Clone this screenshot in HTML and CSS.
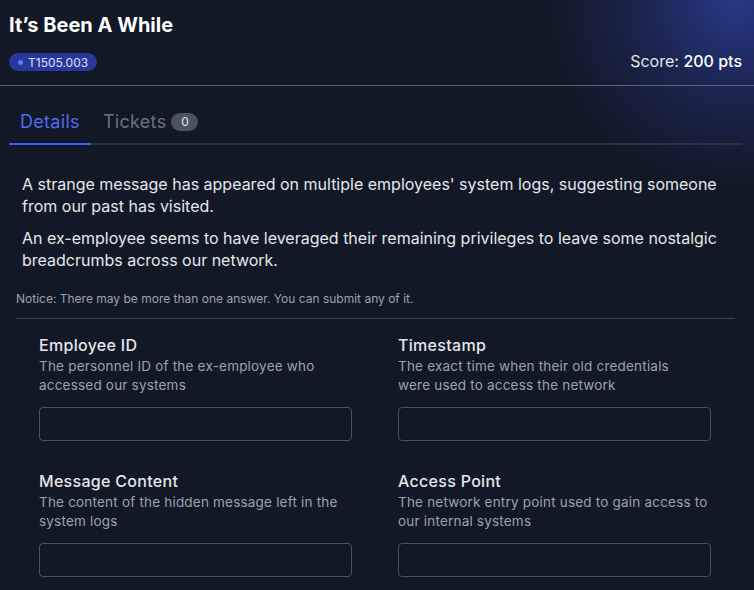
FILE: index.html
```html
<!DOCTYPE html>
<html>
<head>
    <title>It's Been A While</title>
    <meta charset="UTF-8">
    <link rel="stylesheet" href="styles.css">
</head>
<body>
    <div class="challenge">
        <div class="challenge-header">
            <div class="header-left">
                <h1 class="challenge-title">It’s Been A While</h1>
                <span class="technique-badge"><span class="badge-dot"></span>T1505.003</span>
            </div>
            <div class="score">Score: <strong>200 pts</strong></div>
        </div>

        <div class="tabs">
            <div class="tab active">Details</div>
            <div class="tab">Tickets <span class="tab-count">0</span></div>
        </div>

        <div class="description">
            <p>A strange message has appeared on multiple employees' system logs, suggesting someone from our past has visited.</p>
            <p>An ex-employee seems to have leveraged their remaining privileges to leave some nostalgic breadcrumbs across our network.</p>
        </div>

        <div class="notice">Notice: There may be more than one answer. You can submit any of it.</div>

        <div class="answer-grid">
            <div class="field">
                <label class="field-label">Employee ID</label>
                <div class="field-help">The personnel ID of the ex-employee who accessed our systems</div>
                <input class="field-input" type="text">
            </div>
            <div class="field">
                <label class="field-label">Timestamp</label>
                <div class="field-help">The exact time when their old credentials<br>were used to access the network</div>
                <input class="field-input" type="text">
            </div>
            <div class="field">
                <label class="field-label">Message Content</label>
                <div class="field-help">The content of the hidden message left in the system logs</div>
                <input class="field-input" type="text">
            </div>
            <div class="field">
                <label class="field-label">Access Point</label>
                <div class="field-help">The network entry point used to gain access to our internal systems</div>
                <input class="field-input" type="text">
            </div>
        </div>
    </div>
</body>
</html>
```

FILE: styles.css
```css
body {
    margin: 0;
    overflow: hidden;
    height: 590px;
    background:
        radial-gradient(circle 190px at 735px 0px, rgba(42, 58, 140, 0.95), rgba(34, 46, 110, 0.55) 50%, rgba(18, 24, 38, 0) 100%),
        #121826;
    font-family: Inter, "Noto Sans", Arial, sans-serif;
    color: #e5e7eb;
}

.challenge-header {
    display: flex;
    justify-content: space-between;
    align-items: flex-end;
    padding: 12px 12px 14px 9px;
    border-bottom: 1px solid #5d6477;
}

.header-left {
    display: flex;
    flex-direction: column;
    align-items: flex-start;
}

.challenge-title {
    margin: 0 0 15px 0;
    font-size: 20px;
    line-height: 26px;
    font-weight: 700;
    color: #ffffff;
}

.technique-badge {
    display: inline-flex;
    align-items: center;
    gap: 5px;
    height: 18px;
    padding: 0 9px 0 9px;
    border-radius: 9px;
    background: #29379a;
    color: #dbe1ff;
    font-size: 12px;
}

.badge-dot {
    width: 5px;
    height: 5px;
    border-radius: 50%;
    background: #5b7cff;
}

.score {
    font-size: 16px;
    line-height: 20px;
    color: #e5e7eb;
}

.score strong {
    font-weight: 500;
    color: #ffffff;
}

.tabs {
    display: flex;
    gap: 1px;
    margin: 0 12px 0 9px;
    border-bottom: 2px solid #2c313d;
}

.tab {
    display: flex;
    align-items: center;
    gap: 5px;
    padding: 25px 11px 10px 11px;
    margin-bottom: -2px;
    font-size: 18px;
    line-height: 22px;
    letter-spacing: 0.3px;
    color: #6b7280;
    border-bottom: 2px solid transparent;
}

.tab.active {
    color: #4f6bf0;
    border-bottom-color: #3f62f2;
}

.tab-count {
    display: inline-flex;
    align-items: center;
    justify-content: center;
    width: 27px;
    height: 18px;
    border-radius: 9px;
    background: #4b5260;
    color: #e5e7eb;
    font-size: 12px;
    letter-spacing: 0;
}

.description {
    padding: 28px 19px 0 22px;
}

.description p {
    margin: 0 0 10px 0;
    font-size: 16px;
    line-height: 22px;
    color: #e5e7eb;
}

.notice {
    margin: 20px 19px 0 16px;
    padding-bottom: 11px;
    border-bottom: 1px solid #3b4150;
    font-size: 12px;
    line-height: 16px;
    color: #9ca3af;
}

.answer-grid {
    display: grid;
    grid-template-columns: 313px 313px;
    column-gap: 46px;
    row-gap: 30px;
    padding: 16px 0 0 39px;
}

.field {
    display: flex;
    flex-direction: column;
}

.field-label {
    font-size: 16px;
    line-height: 20px;
    font-weight: 500;
    letter-spacing: 0.3px;
    color: #e5e7eb;
}

.field-help {
    margin-top: 2px;
    font-size: 13.5px;
    line-height: 19px;
    letter-spacing: 0.2px;
    color: #9ca3af;
}

.field-input {
    margin-top: 12px;
    height: 34px;
    box-sizing: border-box;
    border: 1px solid #4b5260;
    border-radius: 4px;
    background: transparent;
    color: #e5e7eb;
}
```
